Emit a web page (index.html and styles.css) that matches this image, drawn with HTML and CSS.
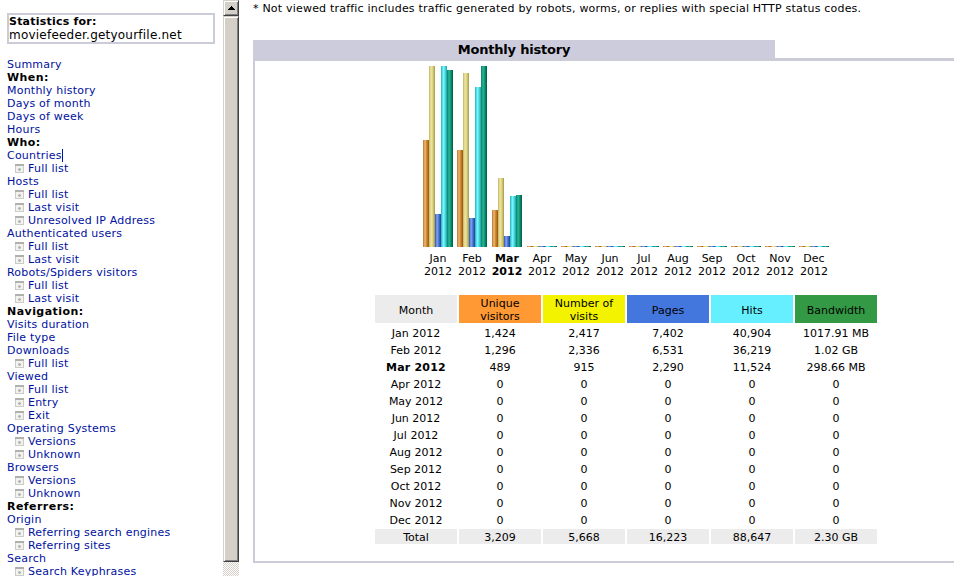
FILE: index.html
```
<!DOCTYPE html>
<html lang="en">
<head>
  <meta charset="UTF-8">
  <title>Statistics for moviefeeder.getyourfile.net (2012-03)</title>
  <link rel="stylesheet" href="styles.css">
</head>
<body>

<svg class="defs" width="0" height="0">
  <symbol id="page" viewBox="0 0 9 9">
    <rect x="0.5" y="0.5" width="8" height="8" fill="#f2f2ee" stroke="#ccccc6"/>
    <path d="M0 1h9" stroke="#b0b0ac" stroke-width="2"/>
    <path d="M3 5.5h3M4.5 4v3" stroke="#b4b4b4" stroke-width="1.4" fill="none"/>
  </symbol>
</svg>

<nav class="sidebar">
  <div class="site">
    <b>Statistics for:</b>
    <span>moviefeeder.getyourfile.net</span>
  </div>
  <ul class="menu">
    <li><a>Summary</a></li>
    <li class="head">When:</li>
    <li><a>Monthly history</a></li>
    <li><a>Days of month</a></li>
    <li><a>Days of week</a></li>
    <li><a>Hours</a></li>
    <li class="head">Who:</li>
    <li><a class="caret">Countries</a></li>
    <li class="sub"><svg><use href="#page"/></svg><a>Full list</a></li>
    <li><a>Hosts</a></li>
    <li class="sub"><svg><use href="#page"/></svg><a>Full list</a></li>
    <li class="sub"><svg><use href="#page"/></svg><a>Last visit</a></li>
    <li class="sub"><svg><use href="#page"/></svg><a>Unresolved IP Address</a></li>
    <li><a>Authenticated users</a></li>
    <li class="sub"><svg><use href="#page"/></svg><a>Full list</a></li>
    <li class="sub"><svg><use href="#page"/></svg><a>Last visit</a></li>
    <li><a>Robots/Spiders visitors</a></li>
    <li class="sub"><svg><use href="#page"/></svg><a>Full list</a></li>
    <li class="sub"><svg><use href="#page"/></svg><a>Last visit</a></li>
    <li class="head">Navigation:</li>
    <li><a>Visits duration</a></li>
    <li><a>File type</a></li>
    <li><a>Downloads</a></li>
    <li class="sub"><svg><use href="#page"/></svg><a>Full list</a></li>
    <li><a>Viewed</a></li>
    <li class="sub"><svg><use href="#page"/></svg><a>Full list</a></li>
    <li class="sub"><svg><use href="#page"/></svg><a>Entry</a></li>
    <li class="sub"><svg><use href="#page"/></svg><a>Exit</a></li>
    <li><a>Operating Systems</a></li>
    <li class="sub"><svg><use href="#page"/></svg><a>Versions</a></li>
    <li class="sub"><svg><use href="#page"/></svg><a>Unknown</a></li>
    <li><a>Browsers</a></li>
    <li class="sub"><svg><use href="#page"/></svg><a>Versions</a></li>
    <li class="sub"><svg><use href="#page"/></svg><a>Unknown</a></li>
    <li class="head">Referrers:</li>
    <li><a>Origin</a></li>
    <li class="sub"><svg><use href="#page"/></svg><a>Referring search engines</a></li>
    <li class="sub"><svg><use href="#page"/></svg><a>Referring sites</a></li>
    <li><a>Search</a></li>
    <li class="sub"><svg><use href="#page"/></svg><a>Search Keyphrases</a></li>
  </ul>
</nav>

<div class="scrollbar">
  <div class="scroll-up"><svg width="7" height="4"><path d="M3 0h1v1h1v1h1v1h1v1H0V3h1V2h1V1h1z" fill="#000"/></svg></div>
  <div class="thumb"></div>
</div>

<main class="content">
  <p class="note">* Not viewed traffic includes traffic generated by robots, worms, or replies with special HTTP status codes.</p>

  <h2 class="title">Monthly history</h2>
  <section class="panel">
    <div class="chart" id="chart"></div>

    <table class="months">
      <tr>
        <th class="month">Month</th>
        <th class="unique">Unique<br>visitors</th>
        <th class="visits">Number of visits</th>
        <th class="pages">Pages</th>
        <th class="hits">Hits</th>
        <th class="bandwidth">Bandwidth</th>
      </tr>
      <tr><td>Jan 2012</td><td>1,424</td><td>2,417</td><td>7,402</td><td>40,904</td><td>1017.91 MB</td></tr>
      <tr><td>Feb 2012</td><td>1,296</td><td>2,336</td><td>6,531</td><td>36,219</td><td>1.02 GB</td></tr>
      <tr><td><b>Mar 2012</b></td><td>489</td><td>915</td><td>2,290</td><td>11,524</td><td>298.66 MB</td></tr>
      <tr><td>Apr 2012</td><td>0</td><td>0</td><td>0</td><td>0</td><td>0</td></tr>
      <tr><td>May 2012</td><td>0</td><td>0</td><td>0</td><td>0</td><td>0</td></tr>
      <tr><td>Jun 2012</td><td>0</td><td>0</td><td>0</td><td>0</td><td>0</td></tr>
      <tr><td>Jul 2012</td><td>0</td><td>0</td><td>0</td><td>0</td><td>0</td></tr>
      <tr><td>Aug 2012</td><td>0</td><td>0</td><td>0</td><td>0</td><td>0</td></tr>
      <tr><td>Sep 2012</td><td>0</td><td>0</td><td>0</td><td>0</td><td>0</td></tr>
      <tr><td>Oct 2012</td><td>0</td><td>0</td><td>0</td><td>0</td><td>0</td></tr>
      <tr><td>Nov 2012</td><td>0</td><td>0</td><td>0</td><td>0</td><td>0</td></tr>
      <tr><td>Dec 2012</td><td>0</td><td>0</td><td>0</td><td>0</td><td>0</td></tr>
      <tr class="total"><td>Total</td><td>3,209</td><td>5,668</td><td>16,223</td><td>88,647</td><td>2.30 GB</td></tr>
    </table>
  </section>
</main>

<script>
  // bar heights in px: unique, visits, pages, hits, bandwidth
  const months = ["Jan", "Feb", "Mar", "Apr", "May", "Jun", "Jul", "Aug", "Sep", "Oct", "Nov", "Dec"];
  const heights = {
    Jan: [107, 181, 33, 181, 177],
    Feb: [97, 174, 29, 160, 181],
    Mar: [37, 69, 11, 51, 52]
  };
  const bars = ["bar-u", "bar-v", "bar-p", "bar-h", "bar-k"];

  document.getElementById("chart").innerHTML = months.map(m => {
    const h = heights[m] || [1, 1, 1, 1, 1];
    const cols = bars.map((b, i) => `<i class="${b}" style="height:${h[i]}px"></i>`).join("");
    return `<div class="slot${m === "Mar" ? " current" : ""}"><div class="bars">${cols}</div><span>${m}<br>2012</span></div>`;
  }).join("");
</script>

</body>
</html>
```
FILE: styles.css
```
* {
  margin: 0;
  padding: 0;
  box-sizing: border-box;
}

body {
  display: flex;
  width: 954px;
  height: 576px;
  overflow: hidden;
  background: #fff;
  color: #000;
  font-family: "DejaVu Sans", Verdana, sans-serif;
  font-size: 11px;
  line-height: 13px;
}

.defs {
  position: absolute;
}

.sidebar {
  width: 223px;
  flex: none;
  padding: 13px 8px 0 7px;
  white-space: nowrap;
  letter-spacing: 0.22px;
}

.site {
  height: 31px;
  border: 2px solid #ccccd8;
  display: flex;
  flex-direction: column;
}

.site b {
  line-height: 14px;
}

.site span {
  font-size: 12px;
}

.menu {
  list-style: none;
  margin-top: 14px;
}

.menu li {
  height: 13px;
}

.menu a {
  color: #0011a0;
}

.menu .head {
  font-weight: bold;
  letter-spacing: 0.45px;
}

.menu .caret {
  border-right: 1px solid #0011a0;
}

.menu .sub {
  display: flex;
  align-items: center;
  padding-left: 8px;
  gap: 4px;
}

.menu svg {
  width: 9px;
  height: 9px;
}

.scrollbar {
  width: 16px;
  flex: none;
  background: repeating-conic-gradient(#d4d0c8 0 25%, #fff 0 50%) 0 0 / 2px 2px;
}

.scroll-up {
  height: 16px;
  display: flex;
  align-items: center;
  justify-content: center;
}

.scroll-up,
.thumb {
  background: #d4d0c8;
  border: 1px solid;
  border-color: #d4d0c8 #404040 #404040 #d4d0c8;
  box-shadow: inset 1px 1px #fff, inset -1px -1px #808080;
}

.thumb {
  height: 546px;
}

.content {
  flex: 1;
  min-width: 0;
  padding-left: 14px;
}

.note {
  padding-top: 2px;
  height: 40px;
  white-space: nowrap;
  letter-spacing: 0.205px;
}

.title {
  width: 522px;
  height: 18px;
  background: #ccccdd;
  font-size: 13px;
  line-height: 19px;
  letter-spacing: -0.2px;
  text-align: center;
}

.panel {
  height: 505px;
  border: 2px solid #ccccd8;
  border-top-width: 3px;
  border-right: 0;
}

.chart {
  display: grid;
  grid-template-columns: 34px 34px 36px repeat(9, 34px);
  margin: 5px 0 0 166px;
}

.slot {
  display: flex;
  flex-direction: column;
  align-items: center;
  gap: 5px;
  text-align: center;
}

.current {
  font-weight: bold;
}

.bars {
  display: flex;
  align-items: flex-end;
  height: 181px;
}

.bars i {
  width: 6px;
}

.bar-u { background: linear-gradient(to right, #b87830, #f0b878 35%, #d08830 60%, #985808); }
.bar-v { background: linear-gradient(to right, #c0b468, #f0e8a0 35%, #dcd080 65%, #a09848); }
.bar-p { background: linear-gradient(to right, #3050a8, #80a8f8 35%, #4870d0 65%, #203c90); }
.bar-h { background: linear-gradient(to right, #28b0b8, #78f8ff 40%, #50e0e8 65%, #20a0a8); }
.bar-k { background: linear-gradient(to right, #088068, #28b898 35%, #109878 60%, #005840); }

.months {
  table-layout: fixed;
  width: 506px;
  margin: 15px 0 0 118px;
  border-spacing: 2px;
  text-align: center;
}

.months th {
  height: 28px;
  padding-top: 2px;
  font-weight: normal;
}

.months td {
  height: 15px;
  padding-top: 2px;
}

.months b {
  letter-spacing: 0.2px;
}

.month,
.total td {
  background: #ececec;
}

.unique { background: #ff9933; }
.visits { background: #f3f300; }
.pages { background: #4477dd; }
.hits { background: #66f0ff; }
.bandwidth { background: #339944; }
```
